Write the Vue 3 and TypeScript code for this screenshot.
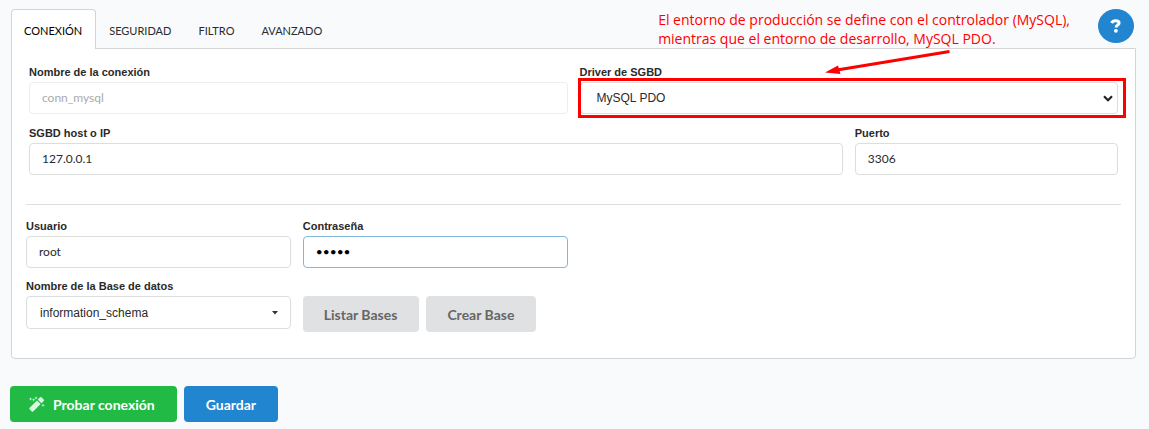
<script setup lang="ts">
import { ref } from 'vue'

const tabs = ['Conexión', 'Seguridad', 'Filtro', 'Avanzado']
const activeTab = ref('Conexión')

const connectionName = ref('conn_mysql')
const driver = ref('MySQL PDO')
const host = ref('127.0.0.1')
const port = ref('3306')
const user = ref('root')
const password = ref('12345')
const database = ref('information_schema')
</script>

<template>
  <main class="page">
    <header class="top">
      <nav class="tabs" role="tablist">
        <button
          v-for="tab in tabs"
          :key="tab"
          type="button"
          role="tab"
          class="tab"
          :class="{ active: tab === activeTab }"
          :aria-selected="tab === activeTab"
          @click="activeTab = tab"
        >{{ tab }}</button>
      </nav>
      <p class="note">
        El entorno de producción se define con el controlador (MySQL),<br />
        mientras que el entorno de desarrollo, MySQL PDO.
      </p>
      <button type="button" class="help" aria-label="Ayuda">
        <svg width="12" height="16" viewBox="0 0 12 16" aria-hidden="true">
          <path d="M1.600 5C2.400 3.400 3.800 2.800 5.700 2.800c2 0 3.400.9 3.400 2.300 0 2-3 1.900-3 4.300" fill="none" stroke="#fff" stroke-width="3" />
          <circle cx="5.900" cy="12.800" r="1.900" fill="#fff" />
        </svg>
      </button>
    </header>

    <form class="panel" @submit.prevent>
      <div class="grid server">
        <div class="field half">
          <label for="name">Nombre de la conexión</label>
          <input id="name" v-model="connectionName" type="text" disabled />
        </div>
        <div class="field half driver">
          <label for="driver">Driver de SGBD</label>
          <div class="select">
            <select id="driver" v-model="driver">
              <option>MySQL PDO</option>
              <option>MySQL</option>
            </select>
            <svg class="chevron" width="10" height="7" viewBox="0 0 10 7" aria-hidden="true">
              <path d="M1 1.200l4 4 4-4" fill="none" stroke="#222" stroke-width="2.200" />
            </svg>
          </div>
          <div class="highlight"></div>
          <svg class="arrow" width="126" height="26" viewBox="0 0 126 26" aria-hidden="true">
            <path d="M124.500 2.500L12 21" stroke="#f00" stroke-width="3" />
            <path d="M0 23.500L13 16.500L15.500 25Z" fill="#f00" />
          </svg>
        </div>
        <div class="field wide">
          <label for="host">SGBD host o IP</label>
          <input id="host" v-model="host" type="text" />
        </div>
        <div class="field">
          <label for="port">Puerto</label>
          <input id="port" v-model="port" type="text" />
        </div>
      </div>

      <hr />

      <div class="grid account">
        <div class="field">
          <label for="user">Usuario</label>
          <input id="user" v-model="user" type="text" />
        </div>
        <div class="field">
          <label for="password">Contraseña</label>
          <input id="password" v-model="password" class="focused" type="password" />
        </div>
        <div class="field base">
          <label for="database">Nombre de la Base de datos</label>
          <div class="select">
            <select id="database" v-model="database">
              <option>information_schema</option>
            </select>
            <svg class="caret" width="6" height="4" viewBox="0 0 6 4" aria-hidden="true">
              <path d="M0 0h6L3 3.500z" fill="#333" />
            </svg>
          </div>
        </div>
        <div class="actions half">
          <button type="button" class="button gray">Listar Bases</button>
          <button type="button" class="button gray">Crear Base</button>
        </div>
      </div>
    </form>

    <footer class="actions bottom">
      <button type="button" class="button green">
        <svg width="16" height="16" viewBox="0 0 16 16" fill="#fff" fill-opacity=".85" aria-hidden="true">
          <path d="M.6 11.800L8 4.400l3.600 3.600L4.200 15.400a1 1 0 0 1-1.400 0L.6 13.200a1 1 0 0 1 0-1.400zM8.800 3.600l2.300-2.300a1 1 0 0 1 1.400 0l2.200 2.200a1 1 0 0 1 0 1.400L12.400 7.200z" />
          <path d="M1.500 1.200l.5 1.300 1.300.5-1.300.5-.5 1.300L1 3.500-.3 3 1 2.500zM4.500 2.200l.5 1.100 1.100.5-1.100.5-.5 1.100L4 4.300l-1.100-.5L4 3.300zM7 .2l.5 1.200 1.200.5-1.200.5L7 3.600l-.5-1.200-1.200-.5 1.200-.5zM14 7.500l.5 1.200 1.200.5-1.200.5-.5 1.200-.5-1.200-1.200-.5 1.200-.5z" />
        </svg>
        Probar conexión
      </button>
      <button type="button" class="button blue">Guardar</button>
    </footer>
  </main>
</template>

<style>
body {
  margin: 0;
  background: #f9fafc;
}
</style>

<style scoped>
* {
  box-sizing: border-box;
}

.page {
  padding: 9px 13px 7px 11px;
  font-family: Lato, 'Liberation Sans', sans-serif;
  font-size: 12px;
  color: #2a2a2a;
}

button,
input,
select {
  margin: 0;
  font: inherit;
  color: inherit;
}

button {
  cursor: pointer;
}

.top {
  display: flex;
  align-items: flex-start;
}

.tabs {
  display: flex;
  position: relative;
  z-index: 1;
  margin-bottom: -1px;
}

.tab {
  height: 40px;
  padding: 2px 13px 0 12px;
  border: 1px solid transparent;
  border-bottom: 0;
  border-radius: 4px 4px 0 0;
  background: transparent;
  font-size: 11px;
  text-transform: uppercase;
}

.tab.active {
  border-color: #d4d4d5;
  background: #fff;
  color: #000;
}

.note {
  margin: 1px 28px 0 auto;
  font-family: 'Open Sans', 'Noto Sans', sans-serif;
  font-size: 14px;
  line-height: 19px;
  color: #f00;
}

.help {
  display: flex;
  align-items: center;
  justify-content: center;
  width: 36px;
  height: 34px;
  margin-right: 2px;
  padding: 0;
  border: 0;
  border-radius: 50%;
  background: #2185d0;
}

.panel {
  padding: 16px 14px 26px;
  border: 1px solid #d4d4d5;
  border-radius: 0 0 4px 4px;
  background: #fff;
}

.grid {
  display: grid;
  grid-template-columns: repeat(4, minmax(0, 1fr));
  column-gap: 12px;
}

.server {
  padding: 0 3px;
  row-gap: 12px;
}

.account {
  row-gap: 11px;
}

.half {
  grid-column: span 2;
}

.wide {
  grid-column: span 3;
}

.field {
  display: flex;
  flex-direction: column;
  gap: 3px;
}

.driver {
  position: relative;
}

.base {
  grid-column-start: 1;
}

label {
  font: bold 11px/14px 'Liberation Sans', Arial, sans-serif;
}

input,
select {
  width: 100%;
  height: 32px;
  padding: 0 12px;
  border: 1px solid #dcdddd;
  border-radius: 4px;
  outline: 0;
  background: #fff;
}

input {
  padding-bottom: 2px;
}

input:disabled {
  border-color: #eee;
  color: #aaa;
}

.focused {
  border-color: #85b7d9;
  color: #000;
}

.select {
  display: flex;
  position: relative;
  align-items: center;
}

select {
  appearance: none;
  padding: 0 24px 0 13px;
  font-family: 'Liberation Sans', Arial, sans-serif;
}

.driver select {
  padding-left: 16px;
}

.base select {
  height: 33px;
}

.chevron,
.caret {
  position: absolute;
  pointer-events: none;
}

.chevron {
  right: 5px;
}

.caret {
  right: 13px;
}

.highlight {
  position: absolute;
  inset: 13px -8px -4px -2px;
  border: 3px solid #f00;
  pointer-events: none;
}

.arrow {
  position: absolute;
  top: -16px;
  right: 167px;
  pointer-events: none;
}

hr {
  margin: 29px 0 14px;
  border: 0;
  border-top: 1px solid #dededf;
}

.actions {
  display: flex;
  gap: 7px;
}

.account .actions {
  padding-top: 17px;
}

.bottom {
  margin: 27px 0 0 -1px;
}

.button {
  display: flex;
  align-items: center;
  justify-content: center;
  gap: 8px;
  height: 36px;
  padding: 0 21px;
  border: 0;
  border-radius: 4px;
  font-size: 14px;
  font-weight: 700;
  color: #fff;
}

.gray {
  padding-right: 22px;
  background: #e0e1e2;
  color: #666;
}

.green {
  padding: 0 22px 0 19px;
  background: #21ba45;
}

.blue {
  padding: 0 22px;
  background: #2185d0;
}
</style>
